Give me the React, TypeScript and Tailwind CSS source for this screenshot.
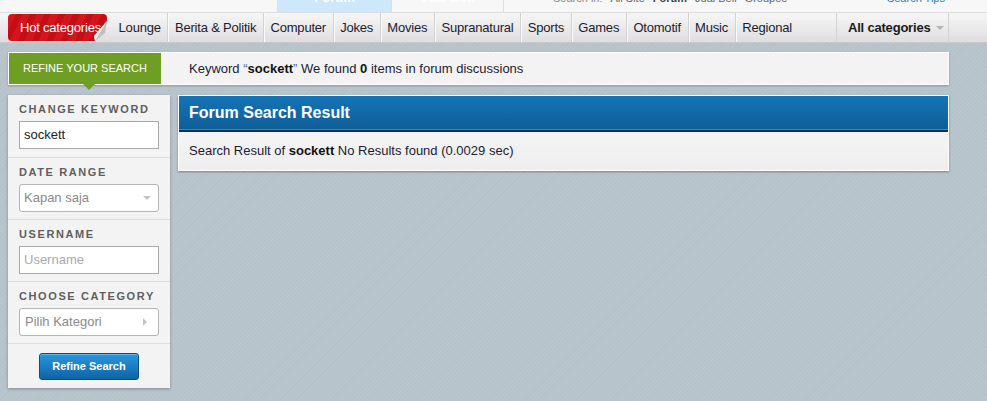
import React from "react";

const navItems = [
  "Lounge",
  "Berita & Politik",
  "Computer",
  "Jokes",
  "Movies",
  "Supranatural",
  "Sports",
  "Games",
  "Otomotif",
  "Music",
  "Regional",
];

function Label({ children }: { children: React.ReactNode }) {
  return (
    <div className="h-[14px] leading-[14px] text-[11px] font-bold tracking-[1.6px] text-[#5f5f5f]">
      {children}
    </div>
  );
}

export default function App() {
  return (
    <div className="min-h-[401px] w-[987px] overflow-hidden font-['Liberation_Sans',Arial,sans-serif] bg-[repeating-linear-gradient(135deg,#b5c1c9_0px,#b5c1c9_1px,#b9c5cd_1px,#b9c5cd_3px)]">
      {/* top strip (cut off) */}
      <div className="relative flex h-[13px] overflow-hidden border-b border-[#dcdcdc] bg-[#f7f7f7]">
        <div className="w-[278px] border-r border-[#dedede]" />
        <div className="w-[113px] bg-[#cde8fa] text-center text-[13px] font-bold leading-[13px] text-white">
          <div className="-mt-[9px]">Forum</div>
        </div>
        <div className="w-[113px] border-x border-[#dedede] text-center text-[13px] font-bold leading-[13px] text-white">
          <div className="-mt-[9px]">Jual Beli</div>
        </div>
        <div className="flex flex-1 text-[11px] leading-[11px]">
          <div className="-mt-[7px] ml-[49px] flex gap-[8px] text-[#8a8a8a]">
            <span>Search in:</span>
            <span className="text-[#666]">All Site</span>
            <span className="font-bold text-[#444]">Forum</span>
            <span className="text-[#666]">Jual Beli</span>
            <span className="text-[#666]">Groupee</span>
          </div>
          <div className="-mt-[7px] ml-auto mr-[42px] text-[#2a7ac0]">Search Tips</div>
        </div>
      </div>

      {/* nav bar */}
      <div className="flex h-[30px] items-stretch whitespace-nowrap border-b border-[#c9c9c9] bg-[linear-gradient(#f6f6f6,#dedede)] text-[13px] tracking-[-0.2px] text-[#221b33]">
        <div className="flex items-center pl-[8px] pr-[5px]">
          <div className="relative h-[27px] w-[99px]">
            <div className="flex h-full w-full items-center rounded-[4px] pl-[12px] text-white [clip-path:polygon(0_0,100%_0,100%_30%,88%_100%,0_100%)] bg-[repeating-linear-gradient(115deg,#d3151d_0px,#d3151d_7px,#c20f17_7px,#c20f17_13px)]">
              Hot categories
            </div>
            <svg className="absolute bottom-0 right-0" width="16" height="20" viewBox="0 0 16 20">
              <polygon points="16,0 4,20 14,12" fill="#e8e8e8" />
              <polygon points="16,0 14,12 4,20 3,15" fill="#bfbfbf" />
              <polygon points="16,0 3,15 4,20" fill="#f4f4f4" />
            </svg>
          </div>
        </div>
        {navItems.map((item, i) => (
          <div
            key={item}
            className={`flex items-center px-[6.6px] ${
              i < navItems.length - 1 ? "border-r border-[#d2d2d2] shadow-[1px_0_0_#fafafa]" : ""
            }`}
          >
            {item}
          </div>
        ))}
        <div className="ml-auto mr-[38px] flex w-[113px] items-center border-x border-[#d2d2d2] pl-[11px] font-bold text-[#1a1a1a]">
          All categories
          <svg className="ml-[6px] mt-[2px]" width="8" height="5" viewBox="0 0 8 5">
            <polygon points="0,0 8,0 4,4" fill="#b5b5b5" />
          </svg>
        </div>
      </div>

      <div className="px-[8px] pt-[9px]">
        {/* refine bar */}
        <div className="relative flex h-[33px] w-[941px] items-stretch border border-white bg-[#f3f3f3] shadow-[0_1px_2px_rgba(0,0,0,0.25)]">
          <div className="relative flex w-[152px] items-center justify-center bg-[#6f9e24] text-[11px] text-white">
            REFINE YOUR SEARCH
            <div className="absolute -bottom-[6px] left-[74px] h-0 w-0 border-x-[6px] border-t-[6px] border-x-transparent border-t-[#6f9e24]" />
          </div>
          <div className="flex items-center pl-[28px] text-[13px] text-[#221b33]">
            Keyword&nbsp;<span className="text-[#4b6aa0]">“</span>
            <b className="text-[#111]">sockett</b>
            <span className="text-[#4b6aa0]">”</span>&nbsp;We found&nbsp;<b className="text-[#111]">0</b>&nbsp;items in forum discussions
          </div>
        </div>

        <div className="mt-[10px] flex items-start gap-[8px]">
          {/* sidebar */}
          <div className="w-[162px] bg-[#f3f3f3] shadow-[0_1px_3px_rgba(0,0,0,0.3)]">
            <div className="border-b border-[#dcdcdc] px-[11px] pb-[8px] pt-[7px]">
              <Label>CHANGE KEYWORD</Label>
              <div className="mt-[5px] flex h-[28px] items-center border border-[#a9a9a9] bg-white pl-[4px] text-[13px] text-[#222]">
                sockett
              </div>
            </div>
            <div className="border-b border-[#dcdcdc] px-[11px] pb-[7px] pt-[7px]">
              <Label>DATE RANGE</Label>
              <div className="mt-[5px] flex h-[28px] items-center justify-between rounded-[3px] border border-[#b5b5b5] bg-white pl-[4px] pr-[7px] text-[13px] text-[#8a8a8a]">
                Kapan saja
                <svg width="8" height="5" viewBox="0 0 8 5">
                  <polygon points="0,0 8,0 4,4" fill="#c4c4c4" />
                </svg>
              </div>
            </div>
            <div className="border-b border-[#dcdcdc] px-[11px] pb-[7px] pt-[7px]">
              <Label>USERNAME</Label>
              <div className="mt-[5px] flex h-[28px] items-center border border-[#a9a9a9] bg-white pl-[4px] text-[13px] text-[#aaaaaa]">
                Username
              </div>
            </div>
            <div className="border-b border-[#dcdcdc] px-[11px] pb-[7px] pt-[7px]">
              <Label>CHOOSE CATEGORY</Label>
              <div className="mt-[5px] flex h-[28px] items-center justify-between rounded-[3px] border border-[#b5b5b5] bg-white pl-[5px] pr-[10px] text-[13px] text-[#8a8a8a]">
                Pilih Kategori
                <svg width="5" height="8" viewBox="0 0 5 8">
                  <polygon points="0,0 4,4 0,8" fill="#c4c4c4" />
                </svg>
              </div>
            </div>
            <div className="flex justify-center pb-[8px] pt-[9px]">
              <div className="flex h-[27px] w-[100px] items-center justify-center rounded-[3px] border border-[#0b4f80] bg-[linear-gradient(#2a97df,#0e64a4)] text-[11px] font-bold text-white shadow-[inset_0_1px_0_rgba(255,255,255,0.3)]">
                Refine Search
              </div>
            </div>
          </div>

          {/* main result */}
          <div className="w-[771px] border border-white shadow-[0_1px_2px_rgba(0,0,0,0.35)]">
            <div className="flex h-[33px] items-center bg-[linear-gradient(#1574b6,#0f5e98)] pl-[10px] text-[16px] font-bold text-white">
              Forum Search Result
            </div>
            <div className="h-[1px] bg-[#2b8ccc]" />
            <div className="h-[2px] bg-[#0b3553]" />
            <div className="flex h-[38px] items-center bg-[linear-gradient(#f4f4f4,#eeeeee)] pl-[10px] text-[13px] text-[#221b33]">
              Search Result of&nbsp;<b className="text-[#111]">sockett</b>&nbsp;No Results found (0.0029 sec)
            </div>
          </div>
        </div>
      </div>
    </div>
  );
}
